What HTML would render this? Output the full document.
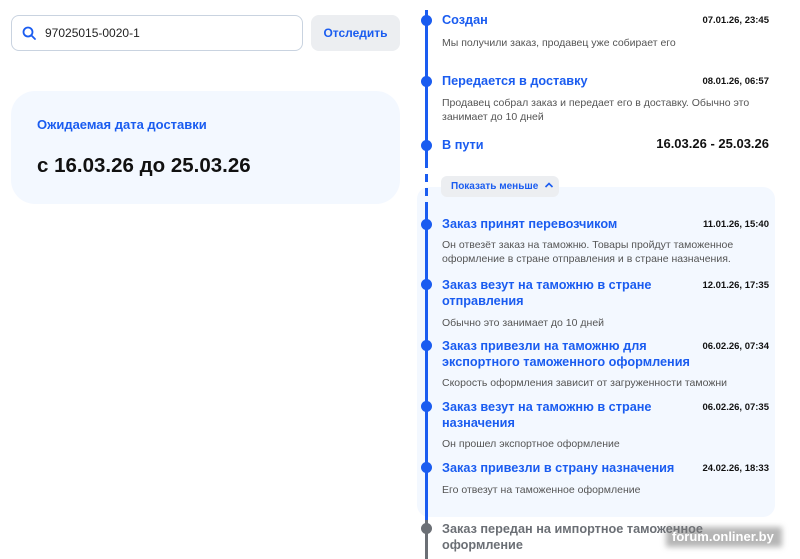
<!DOCTYPE html>
<html><head><meta charset="utf-8"><style>
*{margin:0;padding:0;box-sizing:border-box}
body{width:800px;height:559px;background:#fff;position:relative;overflow:hidden;font-family:"Liberation Sans","DejaVu Sans",sans-serif}
.a{position:absolute;white-space:nowrap}
.t{font-size:12.7px;font-weight:bold;color:#1a5cf0;left:442px;line-height:16px}
.d{font-size:9.5px;font-weight:bold;color:#111;right:31px}
.s{font-size:10.5px;color:#555;left:442px;line-height:14px}
.dot{position:absolute;left:421px;width:11px;height:11px;border-radius:50%;background:#1a5cf0}
</style></head><body>
<div class="a" style="left:11px;top:15px;width:292px;height:36px;border:1px solid #c9d3e0;border-radius:8px"></div>
<svg class="a" style="left:22px;top:26px" width="15" height="15" viewBox="0 0 15 15"><circle cx="6" cy="6" r="4.5" fill="none" stroke="#1a5cf0" stroke-width="1.8"/><path d="M9.5 9.5L13 13" stroke="#1a5cf0" stroke-width="1.8" stroke-linecap="round"/></svg>
<div class="a" style="left:45px;top:26px;font-size:12px;color:#222">97025015-0020-1</div>
<div class="a" style="left:311px;top:15px;width:89px;height:36px;border-radius:8px;background:#eceef1;font-size:12px;font-weight:bold;color:#1a5cf0;text-align:center;line-height:36px">Отследить</div>
<div class="a" style="left:11px;top:91px;width:389px;height:113px;border-radius:24px;background:#f3f8ff"></div>
<div class="a" style="left:37px;top:117px;font-size:13px;font-weight:bold;color:#1a5cf0">Ожидаемая дата доставки</div>
<div class="a" style="left:37px;top:154px;font-size:20.5px;font-weight:bold;color:#111">с 16.03.26 до 25.03.26</div>

<div class="a" style="left:417px;top:187px;width:358px;height:330px;border-radius:12px;background:#f3f8ff"></div>
<div class="a" style="left:425px;top:10px;width:3px;height:150px;background:#1a5cf0"></div>
<div class="a" style="left:425px;top:160px;width:3px;height:45px;background:repeating-linear-gradient(#1a5cf0 0 8px,transparent 8px 14px)"></div>
<div class="a" style="left:425px;top:205px;width:3px;height:315px;background:#1a5cf0"></div>
<div class="a" style="left:425px;top:520px;width:3px;height:39px;background:#6b6f75"></div>

<div class="dot" style="top:15px"></div>
<div class="a t" style="top:12px">Создан</div>
<div class="a d" style="top:15px">07.01.26, 23:45</div>
<div class="a s" style="top:36px">Мы получили заказ, продавец уже собирает его</div>

<div class="dot" style="top:76px"></div>
<div class="a t" style="top:73px">Передается в доставку</div>
<div class="a d" style="top:76px">08.01.26, 06:57</div>
<div class="a s" style="top:96px">Продавец собрал заказ и передает его в доставку. Обычно это<br>занимает до 10 дней</div>

<div class="dot" style="top:140px"></div>
<div class="a t" style="top:137px">В пути</div>
<div class="a" style="right:31px;top:136px;font-size:13px;font-weight:bold;color:#111">16.03.26 - 25.03.26</div>

<div class="a" style="left:441px;top:176px;width:118px;height:21px;border-radius:6px;background:#eceef1;font-size:10px;font-weight:bold;color:#1a5cf0;line-height:21px;padding-left:10px">Показать меньше <svg width="10" height="8" viewBox="0 0 10 8" style="margin-left:3px"><path d="M1.5 6L5 2.5L8.5 6" fill="none" stroke="#1a5cf0" stroke-width="1.6"/></svg></div>

<div class="dot" style="top:219px"></div>
<div class="a t" style="top:216px">Заказ принят перевозчиком</div>
<div class="a d" style="top:219px">11.01.26, 15:40</div>
<div class="a s" style="top:238px">Он отвезёт заказ на таможню. Товары пройдут таможенное<br>оформление в стране отправления и в стране назначения.</div>

<div class="dot" style="top:279px"></div>
<div class="a t" style="top:277px">Заказ везут на таможню в стране<br>отправления</div>
<div class="a d" style="top:280px">12.01.26, 17:35</div>
<div class="a s" style="top:316px">Обычно это занимает до 10 дней</div>

<div class="dot" style="top:340px"></div>
<div class="a t" style="top:338px">Заказ привезли на таможню для<br>экспортного таможенного оформления</div>
<div class="a d" style="top:341px">06.02.26, 07:34</div>
<div class="a s" style="top:376px">Скорость оформления зависит от загруженности таможни</div>

<div class="dot" style="top:401px"></div>
<div class="a t" style="top:399px">Заказ везут на таможню в стране<br>назначения</div>
<div class="a d" style="top:402px">06.02.26, 07:35</div>
<div class="a s" style="top:437px">Он прошел экспортное оформление</div>

<div class="dot" style="top:462px"></div>
<div class="a t" style="top:460px">Заказ привезли в страну назначения</div>
<div class="a d" style="top:463px">24.02.26, 18:33</div>
<div class="a s" style="top:483px">Его отвезут на таможенное оформление</div>

<div class="dot" style="top:523px;background:#6b6f75"></div>
<div class="a t" style="top:521px;color:#6b6f75">Заказ передан на импортное таможенное<br>оформление</div>

<div class="a" style="left:666px;top:527px;width:116px;height:20px;background:rgba(120,120,120,0.55);filter:blur(3px)"></div>
<div class="a" style="left:672px;top:529px;font-size:13px;font-weight:bold;color:#fff">forum.onliner.by</div>
</body></html>
